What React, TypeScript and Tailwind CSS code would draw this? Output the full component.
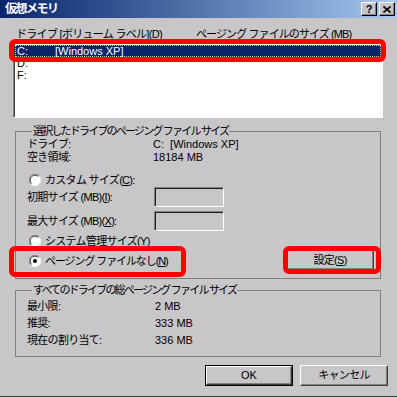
import React from 'react';

const FONT = "font-['Liberation_Sans','Noto_Sans_CJK_JP',sans-serif]";

function Radio({ checked }: { checked?: boolean }) {
  return (
    <svg width="12" height="12" viewBox="0 0 12 12" className="flex-shrink-0">
      <circle cx="6" cy="6" r="5.5" fill="#ffffff" />
      <path d="M10.2 1.8 A5.5 5.5 0 0 0 1.8 10.2" stroke="#808080" fill="none" />
      <path d="M9.4 2.6 A4.6 4.6 0 0 0 2.6 9.4" stroke="#404040" fill="none" />
      <path d="M1.8 10.2 A5.5 5.5 0 0 0 10.2 1.8" stroke="#f0f0f0" fill="none" />
      {checked && <circle cx="6" cy="6" r="2" fill="#000000" />}
    </svg>
  );
}

function RadioRow({ checked, children }: { checked?: boolean; children: React.ReactNode }) {
  return (
    <div className="flex items-center gap-[4px] ml-[2px] h-[14px] leading-[14px] whitespace-nowrap">
      <Radio checked={checked} />
      <span>{children}</span>
    </div>
  );
}

function CapBtn({ children }: { children: React.ReactNode }) {
  return (
    <div className="w-4 h-[14px] bg-[#c8c6c8] border border-t-white border-l-white border-r-black border-b-black shadow-[inset_-1px_-1px_0_#808080] flex items-center justify-center">
      {children}
    </div>
  );
}

function Button({ children, w = 'w-[88px]', h = 'h-[21px]' }: { children: React.ReactNode; w?: string; h?: string }) {
  return (
    <div className={`${w} ${h} bg-[#c8c6c8] border border-t-white border-l-white border-r-[#404040] border-b-[#404040] shadow-[inset_-1px_-1px_0_#808080] flex items-center justify-center leading-none`}>
      {children}
    </div>
  );
}

function TextBox() {
  return (
    <div className="w-[70px] h-[20px] bg-[#c8c6c8] border border-t-[#808080] border-l-[#808080] border-r-white border-b-white shadow-[inset_1px_1px_0_#202020]" />
  );
}

export default function App() {
  return (
    <div className={`${FONT} relative w-[397px] h-[397px] bg-[#c8c6c8] text-[11px] tracking-[-0.7px] text-black flex flex-col border-b border-b-[#404040] overflow-hidden`}>
      {/* Title bar */}
      <div className="h-[18px] bg-linear-to-r from-[#0a246a] to-[#a6caf0] flex items-center justify-between pl-[5px] pr-[2px]">
        <span className="text-white text-[12px] font-bold leading-none tracking-[-1.5px]">仮想メモリ</span>
        <div className="flex gap-[2px]">
          <CapBtn>
            <span className="text-[11px] font-bold leading-none tracking-normal">?</span>
          </CapBtn>
          <CapBtn>
            <svg width="8" height="7" viewBox="0 0 8 7">
              <path d="M0.5 0.5 L7.5 6.5 M7.5 0.5 L0.5 6.5" stroke="#000" strokeWidth="1.6" />
            </svg>
          </CapBtn>
        </div>
      </div>

      {/* Column headers */}
      <div className="mt-[9px] h-[14px] leading-[14px] flex whitespace-nowrap">
        <span className="ml-[16px] w-[180px]">ドライブ [ボリューム ラベル](<u>D</u>)</span>
        <span className="tracking-[-0.9px]">ページング ファイルのサイズ (MB)</span>
      </div>

      {/* Drive list */}
      <div className="ml-[13px] w-[370px] h-[77px] bg-white border border-t-[#808080] border-l-[#808080] border-r-white border-b-white shadow-[inset_1px_1px_0_#404040] pt-[3px] px-[1px] tracking-normal">
        <div className="h-[12px] leading-[11px] flex bg-[#0a246a] text-white border border-dotted border-[#d8c880]">
          <span className="pl-[1px] w-[39px]">C:</span>
          <span>[Windows XP]</span>
        </div>
        <div className="h-[12px] leading-[12px] pl-[2px]">D:</div>
        <div className="h-[12px] leading-[12px] pl-[2px]">F:</div>
      </div>

      {/* Selected drive group */}
      <fieldset className="mt-[6px] ml-[15px] w-[366px] border border-[#808080] pl-[11px] pr-[6px] pb-[8px]">
        <legend className="ml-[5px] px-[1px] h-[14px] leading-[14px] tracking-[-1.8px]">選択したドライブのページング ファイル サイズ</legend>
        <div className="flex h-[13px] leading-[13px]">
          <span className="w-[126px]">ドライブ:</span>
          <span className="tracking-normal">C:&nbsp;&nbsp;[Windows XP]</span>
        </div>
        <div className="flex h-[13px] leading-[13px]">
          <span className="w-[126px]">空き領域:</span>
          <span className="tracking-normal">18184 MB</span>
        </div>
        <div className="mt-[9px]">
          <RadioRow>カスタム サイズ(<u>C</u>):</RadioRow>
        </div>
        <div className="flex items-center">
          <span className="w-[127px]">初期サイズ (MB)(<u>I</u>):</span>
          <TextBox />
        </div>
        <div className="flex items-center mt-[4px]">
          <span className="w-[127px]">最大サイズ (MB)(<u>X</u>):</span>
          <TextBox />
        </div>
        <div className="mt-[3px]">
          <RadioRow>システム管理サイズ(<u>Y</u>)</RadioRow>
        </div>
        <div className="mt-[2px] h-[20px] flex items-start justify-between">
          <div className="pt-[4px] tracking-[-1.1px]">
            <RadioRow checked>ページング ファイルなし(<u>N</u>)</RadioRow>
          </div>
          <Button h="h-[20px]">設定(<u>S</u>)</Button>
        </div>
      </fieldset>

      {/* Total group */}
      <fieldset className="mt-[4px] ml-[15px] w-[366px] border border-[#808080] pl-[11px] pt-[1px] pb-[7px]">
        <legend className="ml-[5px] px-[1px] h-[14px] leading-[14px] tracking-[-1.8px]">すべてのドライブの総ページング ファイル サイズ</legend>
        {[
          ['最小限:', '2 MB'],
          ['推奨:', '333 MB'],
          ['現在の割り当て:', '336 MB'],
        ].map(([k, v]) => (
          <div key={k} className="flex h-[17px] leading-[17px]">
            <span className="w-[128px]">{k}</span>
            <span className="tracking-normal">{v}</span>
          </div>
        ))}
      </fieldset>

      {/* Dialog buttons */}
      <div className="mt-[8px] flex justify-end gap-[7px] pr-[9px]">
        <div className="w-[88px] h-[21px] border border-black">
          <Button w="w-[86px]" h="h-[19px]"><span className="tracking-normal">OK</span></Button>
        </div>
        <Button>キャンセル</Button>
      </div>

      {/* Red highlight marks */}
      <div className="absolute left-[9px] top-[39px] w-[377px] h-[23px] border-[5px] border-[#ff0000] rounded-[6px]" />
      <div className="absolute left-[9px] top-[246px] w-[177px] h-[31px] border-[5px] border-[#ff0000] rounded-[6px]" />
      <div className="absolute left-[283px] top-[246px] w-[98px] h-[28px] border-[5px] border-[#ff0000] rounded-[6px]" />
    </div>
  );
}
